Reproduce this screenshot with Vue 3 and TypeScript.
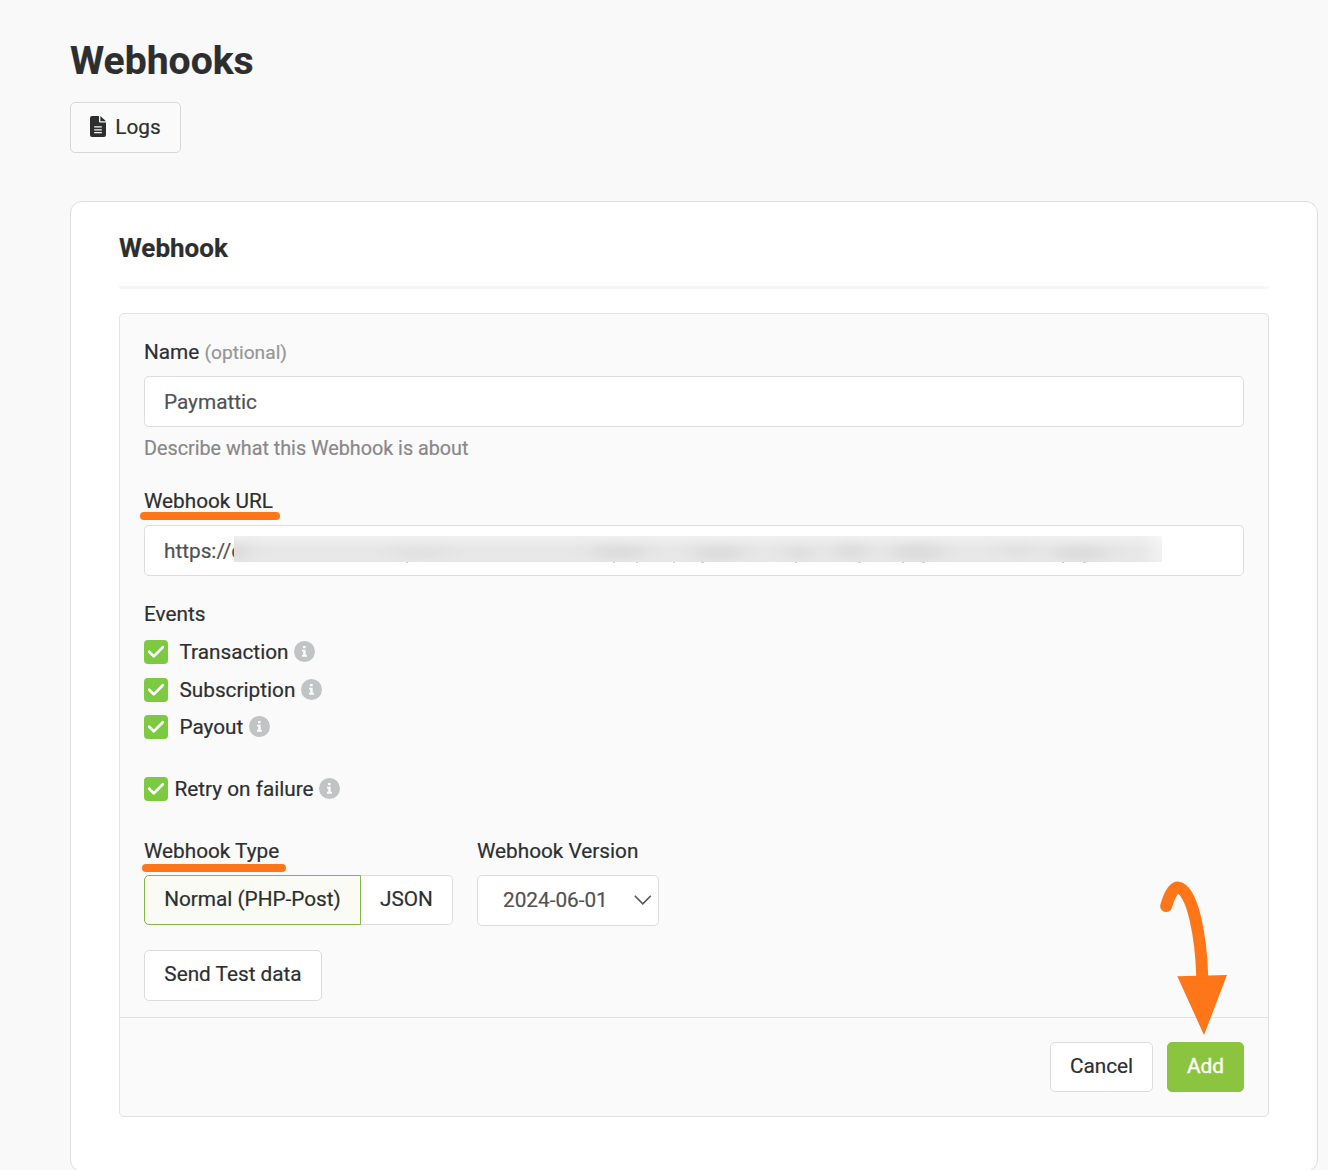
<script setup lang="ts">
import { ref } from 'vue'

interface EventOption {
  key: string
  label: string
  checked: boolean
}

const name = ref('Paymattic')
const url = ref('https://d')
const version = ref('2024-06-01')
const retry = ref(true)
const type = ref<'post' | 'json'>('post')

const events = ref<EventOption[]>([
  { key: 'transaction', label: 'Transaction', checked: true },
  { key: 'subscription', label: 'Subscription', checked: true },
  { key: 'payout', label: 'Payout', checked: true },
])
</script>

<template>
  <div class="page">
    <h1 class="title">Webhooks</h1>
    <button class="btn logs" type="button">
      <svg class="file" viewBox="0 0 16 21" width="16" height="21">
        <path d="M2 0H9V5.5Q9 6.6 10.1 6.6H16V19Q16 21 14 21H2Q0 21 0 19V2Q0 0 2 0Z" fill="#2d2f2f" />
        <path d="M10.4 0L16 5.3H10.4Z" fill="#2d2f2f" />
        <path d="M4.2 10.9H11.8M4.2 13.8H11.8M4.2 16.7H11.8" stroke="#f9f9f9" stroke-width="1.2" />
      </svg>
      <span>Logs</span>
    </button>

    <section class="card">
      <h2 class="heading">Webhook</h2>
      <div class="rule"></div>

      <div class="panel">
        <div class="body">
          <div class="label">Name <span class="optional">(optional)</span></div>
          <div class="input"><span>{{ name }}</span></div>
          <div class="help">Describe what this Webhook is about</div>

          <div class="label url-label"><span>Webhook URL</span><i class="mark mark-url"></i></div>
          <div class="input">
            <span>{{ url }}</span>
            <svg class="redact" viewBox="0 0 928 28" width="928" height="28">
              <defs>
                <linearGradient id="fade" x1="0" y1="0" x2="0" y2="1">
                  <stop offset="0" stop-color="#f0f0f0" />
                  <stop offset="0.5" stop-color="#e7e7e7" />
                  <stop offset="1" stop-color="#e8e8e8" />
                </linearGradient>
                <filter id="soft" x="-50%" y="-100%" width="200%" height="300%" color-interpolation-filters="sRGB">
                  <feGaussianBlur stdDeviation="9 4" />
                </filter>
                <clipPath id="strip"><rect width="928" height="26" rx="1" /></clipPath>
              </defs>
              <g clip-path="url(#strip)">
                <rect width="928" height="26" fill="url(#fade)" />
                <g fill="#dbdbdb" filter="url(#soft)">
                  <ellipse cx="3" cy="16" rx="12" ry="9" />
                  <ellipse cx="186" cy="17" rx="28" ry="5" opacity=".6" />
                  <ellipse cx="385" cy="16" rx="28" ry="7" />
                  <ellipse cx="485" cy="17" rx="26" ry="7" />
                  <ellipse cx="565" cy="17" rx="12" ry="6" />
                  <ellipse cx="617" cy="15" rx="16" ry="7" />
                  <ellipse cx="684" cy="16" rx="26" ry="8" />
                  <ellipse cx="785" cy="14" rx="20" ry="6" opacity=".5" />
                  <ellipse cx="847" cy="17" rx="28" ry="7" />
                </g>
                <rect x="918" y="-10" width="30" height="46" fill="#fff" opacity=".5" filter="url(#soft)" />
              </g>
              <path d="M172 26.4h2M379 26.4h2M402 26.4h2M439 26.4h2M467 26.4h3M561 26.4h2M624 26.4h3M668 26.4h2M688 26.4h3M828 26.4h2M849 26.4h3" stroke="#cacaca" stroke-width="1" />
            </svg>
          </div>

          <div class="label events-label">Events</div>
          <div class="checks">
            <div v-for="e in events" :key="e.key" class="check" :class="e.key">
              <span class="box"><svg v-if="e.checked" viewBox="0 0 24 24" width="24" height="24"><path d="M5.2 11.8L9.8 16.4L18.8 7.2" fill="none" stroke="#fff" stroke-width="2.7" stroke-linecap="round" stroke-linejoin="round" /></svg></span>
              <span class="text">{{ e.label }}</span>
              <svg class="info" viewBox="0 0 20 20" width="21" height="21"><circle cx="10" cy="10" r="10" fill="#c1c4c4" /><path d="M8.5 4.7h2.6v2.3H8.5zM7.6 8.3h3.5v4.9h1.2v1.7H7.6v-1.7h1.2V10H7.6z" fill="#fbfbfb" /></svg>
            </div>
          </div>
          <div class="check retry">
            <span class="box"><svg v-if="retry" viewBox="0 0 24 24" width="24" height="24"><path d="M5.2 11.8L9.8 16.4L18.8 7.2" fill="none" stroke="#fff" stroke-width="2.7" stroke-linecap="round" stroke-linejoin="round" /></svg></span>
            <span class="text">Retry on failure</span>
            <svg class="info" viewBox="0 0 20 20" width="21" height="21"><circle cx="10" cy="10" r="10" fill="#c1c4c4" /><path d="M8.5 4.7h2.6v2.3H8.5zM7.6 8.3h3.5v4.9h1.2v1.7H7.6v-1.7h1.2V10H7.6z" fill="#fbfbfb" /></svg>
          </div>

          <div class="columns">
            <div class="col-type">
              <div class="label"><span>Webhook Type</span><i class="mark mark-type"></i></div>
              <div class="group">
                <button type="button" class="seg first" :class="{ active: type === 'post' }" @click="type = 'post'">Normal (PHP-Post)</button>
                <button type="button" class="seg last" :class="{ active: type === 'json' }" @click="type = 'json'">JSON</button>
              </div>
            </div>
            <div class="col-version">
              <div class="label"><span>Webhook Version</span></div>
              <div class="select">
                <span>{{ version }}</span>
                <svg viewBox="0 0 18 11" width="18" height="11"><path d="M.8 1.7L8.8 9.9L16.8 1.7" fill="none" stroke="#555" stroke-width="1.6" /></svg>
              </div>
            </div>
          </div>

          <button class="btn send" type="button">Send Test data</button>
        </div>
        <div class="footer">
          <button class="btn cancel" type="button">Cancel</button>
          <button class="btn add" type="button">Add</button>
          <svg class="arrow" viewBox="0 0 70 156" width="70" height="156">
            <path d="M9 26.5C12 16 16.5 7.5 21 8C36 10.5 44 60 45 96" transform="translate(-2.8 -.4)" fill="none" stroke="#ff7618" stroke-width="12" stroke-linecap="round" stroke-linejoin="round" />
            <path d="M17.3 96.2L67 95L44 155Z" fill="#ff7618" />
          </svg>
        </div>
      </div>
    </section>
  </div>
</template>

<style>
body {
  background: #f9f9f9;
  overflow: hidden;
}
</style>

<style scoped>
.page {
  box-sizing: border-box;
  width: 1328px;
  height: 1170px;
  padding: 36px 10px 0 70px;
  overflow: hidden;
  background: #f9f9f9;
  color: #2d2f2f;
  font: 400 20.75px/24px Roboto, "Liberation Sans", sans-serif;
  -webkit-text-stroke-width: 0.2px;
}
.page * {
  box-sizing: border-box;
}
.title {
  margin: 0;
  height: 66px;
  font-size: 39.1px;
  line-height: 50px;
  font-weight: 700;
}
.btn {
  display: flex;
  align-items: center;
  justify-content: center;
  height: 51px;
  padding: 0 0 2px;
  border: 1px solid #ddd;
  border-radius: 5px;
  background: #fff;
  color: #2d2f2f;
  font: inherit;
  white-space: nowrap;
}
.logs {
  width: 111px;
  gap: 9px;
  background: #fafafa;
  border-color: #d8d8d8;
}
.file {
  margin-top: -1px;
}
.card {
  height: 971px;
  margin-top: 48px;
  padding: 0 48px;
  border: 1px solid #ddd;
  border-radius: 12px;
  background: #fff;
}
.heading {
  margin: 0;
  padding-top: 30px;
  height: 84px;
  font-size: 26px;
  line-height: 33px;
  font-weight: 700;
}
.rule {
  height: 3px;
  background: #f6f6f6;
  border-radius: 2px;
}
.panel {
  height: 804px;
  margin-top: 24px;
  border: 1px solid #e2e2e2;
  border-radius: 5px;
  background: #fafafa;
}
.body {
  height: 703px;
  padding: 26px 24px 0;
}
.label {
  position: relative;
  height: 36px;
  white-space: nowrap;
}
.optional {
  color: #969696;
  font-size: 19.2px;
}
.input {
  position: relative;
  display: flex;
  align-items: center;
  height: 51px;
  padding: 0 19px;
  border: 1px solid #ddd;
  border-radius: 5px;
  background: #fff;
  color: #505252;
}
.redact {
  position: absolute;
  left: 89px;
  top: 10px;
}
.help {
  height: 62px;
  padding-top: 10px;
  color: #888;
  font-size: 19.75px;
}
.mark {
  position: absolute;
  height: 8px;
  border-radius: 4px;
  background: #ff7618;
}
.mark-url {
  left: -4px;
  top: 23px;
  width: 140px;
}
.mark-type {
  left: -2px;
  top: 25px;
  width: 144px;
}
.events-label {
  margin-top: 26px;
  height: 38px;
}
.checks {
  height: 137px;
}
.check {
  display: flex;
  align-items: center;
  height: 24px;
  margin-bottom: 14px;
}
.subscription {
  margin-bottom: 13px;
}
.box {
  width: 24px;
  height: 24px;
  border-radius: 4px;
  background: #7dc941;
}
.box svg {
  display: block;
}
.text {
  margin-left: 11.5px;
}
.retry .text {
  margin-left: 6.5px;
}
.info {
  margin: -2px 0 0 5.7px;
}
.retry .info {
  margin-left: 5px;
}
.columns {
  display: flex;
  margin-top: 38px;
}
.col-type {
  width: 333px;
}
.group {
  display: flex;
}
.seg {
  height: 50px;
  padding: 0 0 2px;
  border: 1px solid #ddd;
  background: #fff;
  color: #2d2f2f;
  font: inherit;
  white-space: nowrap;
}
.first {
  width: 217px;
  border-radius: 5px 0 0 5px;
}
.last {
  width: 92px;
  border-left: 0;
  border-radius: 0 5px 5px 0;
}
.active {
  border-color: #83b74a;
  background: #f9fbf4;
}
.select {
  display: flex;
  align-items: center;
  justify-content: space-between;
  width: 182px;
  height: 51px;
  padding: 0 6px 2px 25px;
  border: 1px solid #ddd;
  border-radius: 5px;
  background: #fff;
  color: #505252;
}
.send {
  width: 178px;
  margin-top: 24px;
  padding-bottom: 3px;
}
.footer {
  position: relative;
  display: flex;
  justify-content: flex-end;
  gap: 14px;
  padding: 24px 24px 0;
  border-top: 1px solid #e2e2e2;
}
.footer .btn {
  height: 50px;
}
.cancel {
  width: 103px;
}
.add {
  width: 77px;
  border-color: #8bc53f;
  background: #8bc53f;
  color: #fff;
  -webkit-text-stroke-width: 0.4px;
}
.arrow {
  position: absolute;
  left: 1040px;
  top: -138px;
}
</style>
